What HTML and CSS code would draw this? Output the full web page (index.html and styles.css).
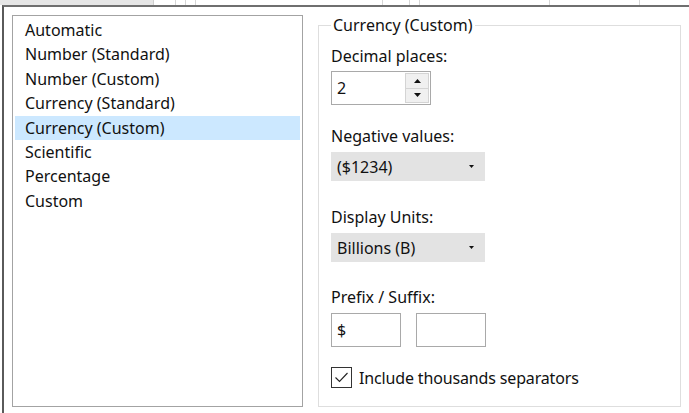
FILE: index.html
```html
<!DOCTYPE html>
<html>
<head>
<meta charset="utf-8">
<link rel="stylesheet" href="styles.css">
</head>
<body>
<div class="topstrip">
  <span class="cell c1"></span>
  <span class="cell c2"></span>
  <span class="cell c3"></span>
  <span class="cell c4"></span>
  <span class="cell c5"></span>
  <span class="cell c6"></span>
  <span class="cell c7"></span>
  <span class="cell c8"></span>
  <span class="cell c9"></span>
</div>
<div class="frame">
  <div class="dialog">
    <ul class="list">
      <li>Automatic</li>
      <li>Number (Standard)</li>
      <li>Number (Custom)</li>
      <li>Currency (Standard)</li>
      <li class="sel">Currency (Custom)</li>
      <li>Scientific</li>
      <li>Percentage</li>
      <li>Custom</li>
    </ul>
    <fieldset class="group">
      <legend>Currency (Custom)</legend>
      <div class="lbl">Decimal places:</div>
      <div class="spin">
        <span class="spin-val">2</span>
        <span class="spin-btns">
          <span class="spin-btn"><svg width="7" height="4" viewBox="0 0 7 4"><path d="M0 4 L3.5 0 L7 4 Z" fill="#111"/></svg></span>
          <span class="spin-btn"><svg width="7" height="4" viewBox="0 0 7 4"><path d="M0 0 L3.5 4 L7 0 Z" fill="#111"/></svg></span>
        </span>
      </div>
      <div class="lbl l2">Negative values:</div>
      <div class="combo"><span>($1234)</span><svg class="caret" width="5" height="3" viewBox="0 0 5 3"><path d="M0 0 L2.5 3 L5 0 Z" fill="#111"/></svg></div>
      <div class="lbl l3">Display Units:</div>
      <div class="combo"><span>Billions (B)</span><svg class="caret" width="5" height="3" viewBox="0 0 5 3"><path d="M0 0 L2.5 3 L5 0 Z" fill="#111"/></svg></div>
      <div class="lbl l4">Prefix / Suffix:</div>
      <div class="inputs">
        <span class="txt">$</span>
        <span class="txt"></span>
      </div>
      <div class="check">
        <span class="box"><svg width="19" height="19" viewBox="0 0 19 19"><path d="M3.5 9.5 L7.5 13.5 L15.5 5" fill="none" stroke="#222" stroke-width="1.1"/></svg></span>
        <span class="check-lbl">Include thousands separators</span>
      </div>
    </fieldset>
  </div>
</div>
</body>
</html>
```

FILE: styles.css
```css
html, body {
  margin: 0;
  padding: 0;
  background: #ffffff;
}
body {
  font-family: "Noto Sans", "DejaVu Sans", sans-serif;
  font-size: 16px;
  color: #111111;
  width: 689px;
  height: 413px;
  overflow: hidden;
}
.topstrip {
  display: flex;
  height: 5px;
}
.cell {
  display: block;
  height: 5px;
  border-right: 1px solid #d6d6d6;
  box-sizing: border-box;
}
.c1 { width: 154px; background: #e6e6e6; border-right-color: #cfcfcf; }
.c2 { width: 22px; }
.c3 { width: 10px; }
.c4 { width: 10px; }
.c5 { width: 187px; }
.c6 { width: 27px; }
.c7 { width: 10px; }
.c8 { width: 130px; }
.c9 { width: 90px; }
.frame {
  margin-left: 2px;
  border-top: 2px solid #6f6f6f;
  border-left: 2px solid #5a5a5a;
  height: 408px;
  box-sizing: border-box;
  padding: 8px 0 0 8px;
}
.dialog {
  display: flex;
  align-items: flex-start;
  gap: 15px;
}
.list {
  margin: 0;
  padding: 2px;
  list-style: none;
  width: 291px;
  height: 392px;
  box-sizing: border-box;
  border: 1px solid #a3a3a3;
}
.list li {
  height: 24.4px;
  line-height: 24.4px;
  padding-left: 10px;
  white-space: nowrap;
}
.list li.sel {
  background: #cce8ff;
}
.group {
  margin: 0;
  min-width: 0;
  width: 363px;
  height: 392px;
  box-sizing: border-box;
  border: 1px solid #dedede;
  padding: 11px 12px 0 12px;
  display: flex;
  flex-direction: column;
  align-items: flex-start;
}
.group legend {
  padding: 0 2px;
  line-height: 20px;
}
.lbl {
  line-height: 20px;
}
.spin {
  margin-top: 5px;
  width: 100px;
  height: 34px;
  box-sizing: border-box;
  border: 1px solid #a9a9a9;
  display: flex;
}
.spin-val {
  flex: 1;
  padding-left: 5px;
  line-height: 32px;
}
.spin-btns {
  width: 24px;
  margin: 1px 1px 1px 0;
  display: flex;
  flex-direction: column;
}
.spin-btn {
  flex: 1;
  background: #f0f0f0;
  border: 1px solid #d4d4d4;
  display: flex;
  align-items: center;
  justify-content: center;
}
.spin-btn + .spin-btn {
  border-top: none;
}
.l2 { margin-top: 21px; }
.l3 { margin-top: 26px; }
.l4 { margin-top: 25px; }
.combo {
  margin-top: 6px;
  width: 154px;
  height: 29px;
  box-sizing: border-box;
  background: #e3e3e3;
  display: flex;
  align-items: center;
  justify-content: space-between;
  padding: 0 11px 0 6px;
}
.caret {
  display: block;
}
.inputs {
  margin-top: 6px;
  display: flex;
  gap: 15px;
}
.txt {
  display: block;
  width: 70px;
  height: 34px;
  box-sizing: border-box;
  border: 1px solid #a9a9a9;
  padding-left: 5px;
  line-height: 32px;
}
.check {
  margin-top: 20px;
  display: flex;
  align-items: center;
  gap: 7px;
}
.box {
  display: block;
  width: 21px;
  height: 21px;
  box-sizing: border-box;
  border: 1px solid #333333;
}
.box svg {
  display: block;
}
.check-lbl {
  line-height: 20px;
  letter-spacing: -0.15px;
}
```
